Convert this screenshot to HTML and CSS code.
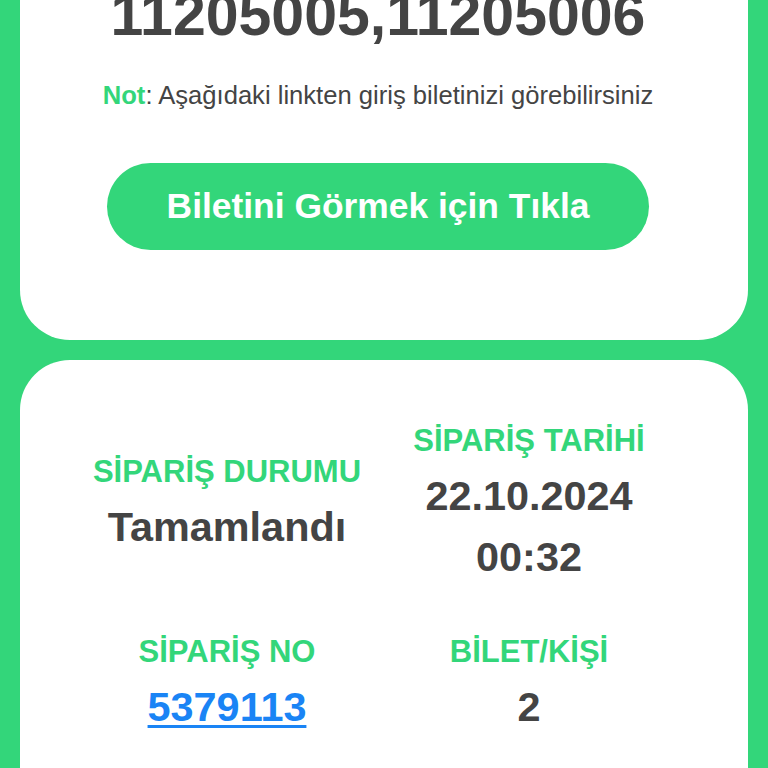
FILE: index.html
```html
<!DOCTYPE html>
<html lang="tr">
<head>
<meta charset="utf-8">
<title>Sipariş</title>
<link rel="stylesheet" href="styles.css">
</head>
<body>
<main class="page">
  <section class="card card-ticket">
    <div class="ticket-no">11205005,11205006</div>
    <p class="note"><span class="note-label">Not</span>: Aşağıdaki linkten giriş biletinizi görebilirsiniz</p>
    <a class="ticket-btn" href="#">Biletini Görmek için Tıkla</a>
  </section>
  <section class="card card-order">
    <div class="info-grid">
      <div class="info-item info-center">
        <div class="info-label">SİPARİŞ DURUMU</div>
        <div class="info-value">Tamamlandı</div>
      </div>
      <div class="info-item">
        <div class="info-label">SİPARİŞ TARİHİ</div>
        <div class="info-value">22.10.2024 00:32</div>
      </div>
      <div class="info-item">
        <div class="info-label">SİPARİŞ NO</div>
        <div class="info-value"><a class="order-link" href="#">5379113</a></div>
      </div>
      <div class="info-item">
        <div class="info-label">BİLET/KİŞİ</div>
        <div class="info-value">2</div>
      </div>
    </div>
  </section>
</main>
</body>
</html>
```

FILE: styles.css
```css
html, body {
  margin: 0;
  padding: 0;
}
body {
  background: #33d67a;
  font-family: "Liberation Sans", Arial, sans-serif;
  color: #444444;
  overflow: hidden;
}
.page {
  display: flex;
  flex-direction: column;
  gap: 20px;
  padding: 0 20px;
  margin-top: -14px;
}
.card {
  background: #ffffff;
  border-radius: 50px;
  padding-left: 56px;
  padding-right: 68px;
}
.card-ticket {
  border-top-left-radius: 0;
  border-top-right-radius: 0;
  display: flex;
  flex-direction: column;
  align-items: center;
  padding-top: 0;
  padding-bottom: 90px;
}
.ticket-no {
  font-size: 59px;
  line-height: 59px;
  font-weight: 700;
  color: #444444;
  white-space: nowrap;
}
.note {
  margin: 34px 0 0;
  font-size: 25.6px;
  line-height: 33px;
  color: #444444;
  white-space: nowrap;
}
.note-label {
  color: #33d67a;
  font-weight: 700;
}
.ticket-btn {
  margin-top: 51px;
  width: 542px;
  height: 87px;
  border-radius: 44px;
  background: #33d67a;
  color: #ffffff;
  font-size: 35.4px;
  font-weight: 700;
  text-decoration: none;
  display: flex;
  align-items: center;
  justify-content: center;
}
.card-order {
  border-bottom-left-radius: 0;
  border-bottom-right-radius: 0;
  padding-top: 56px;
  padding-bottom: 80px;
}
.info-grid {
  display: grid;
  grid-template-columns: 1fr 1fr;
  row-gap: 39px;
}
.info-item {
  text-align: center;
  font-weight: 700;
}
.info-center {
  align-self: center;
}
.info-label {
  font-size: 31px;
  line-height: 50px;
  color: #33d67a;
  white-space: nowrap;
}
.info-value {
  font-size: 41.4px;
  line-height: 61px;
  color: #444444;
}
.order-link {
  color: #1a84f5;
  text-decoration: underline;
  text-decoration-thickness: 3px;
  text-underline-offset: 4px;
}
```
